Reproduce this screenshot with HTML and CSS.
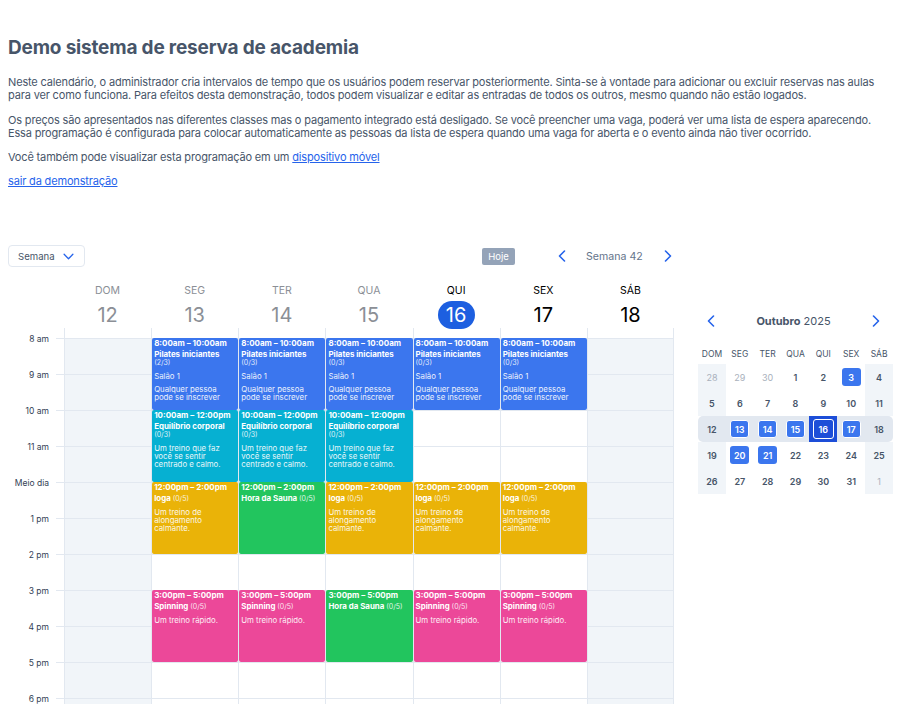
FILE: index.html
```html
<!DOCTYPE html>
<html lang="pt-BR">
<head>
  <meta charset="UTF-8" />
  <title>Demo sistema de reserva de academia</title>
  <link rel="stylesheet" href="styles.css">
</head>
<body>

  <div class="intro">
    <h1>Demo sistema de reserva de academia</h1>
    <p>Neste calendário, o administrador cria intervalos de tempo que os usuários podem reservar posteriormente. Sinta-se à vontade para adicionar ou excluir reservas nas aulas para ver como funciona. Para efeitos desta demonstração, todos podem visualizar e editar as entradas de todos os outros, mesmo quando não estão logados.</p>
    <p>Os preços são apresentados nas diferentes classes mas o pagamento integrado está desligado. Se você preencher uma vaga, poderá ver uma lista de espera aparecendo. Essa programação é configurada para colocar automaticamente as pessoas da lista de espera quando uma vaga for aberta e o evento ainda não tiver ocorrido.</p>
    <p>Você também pode visualizar esta programação em um <a href="#">dispositivo móvel</a></p>
    <p><a href="#">sair da demonstração</a></p>
  </div>

  <div class="schedule">
    <div class="main">
      <div class="toolbar">
        <div class="view-select">Semana
          <svg width="11" height="7" viewBox="0 0 12 8"><path d="M1 1.5l5 5 5-5" fill="none" stroke="#2563eb" stroke-width="1.5" stroke-linecap="round" stroke-linejoin="round"/></svg>
        </div>
        <button class="today-btn">Hoje</button>
        <div class="week-nav">
          <svg width="8" height="12" viewBox="0 0 8 12"><path d="M6.5 1l-5 5 5 5" fill="none" stroke="#2563eb" stroke-width="1.6" stroke-linecap="round" stroke-linejoin="round"/></svg>
          <span>Semana 42</span>
          <svg width="8" height="12" viewBox="0 0 8 12"><path d="M1.5 1l5 5-5 5" fill="none" stroke="#2563eb" stroke-width="1.6" stroke-linecap="round" stroke-linejoin="round"/></svg>
        </div>
      </div>

      <div class="day-heads">
        <div class="day-head past"><span class="dow">DOM</span><span class="num">12</span></div>
        <div class="day-head past"><span class="dow">SEG</span><span class="num">13</span></div>
        <div class="day-head past"><span class="dow">TER</span><span class="num">14</span></div>
        <div class="day-head past"><span class="dow">QUA</span><span class="num">15</span></div>
        <div class="day-head today"><span class="dow">QUI</span><span class="num">16</span></div>
        <div class="day-head"><span class="dow">SEX</span><span class="num">17</span></div>
        <div class="day-head"><span class="dow">SÁB</span><span class="num">18</span></div>
      </div>

      <div class="week">
        <div class="hours">
          <span>8 am</span><span>9 am</span><span>10 am</span><span>11 am</span><span>Meio dia</span><span>1 pm</span><span>2 pm</span><span>3 pm</span><span>4 pm</span><span>5 pm</span><span>6 pm</span>
        </div>

        <div class="day weekend"></div>

        <div class="day">
          <div class="event blue h2">
            <div class="ev-time">8:00am – 10:00am</div>
            <div class="ev-name">Pilates iniciantes</div>
            <div class="ev-count block">(2/3)</div>
            <div class="ev-text">Salão 1</div>
            <div class="ev-text">Qualquer pessoa pode se inscrever</div>
          </div>
          <div class="event cyan h2">
            <div class="ev-time">10:00am – 12:00pm</div>
            <div class="ev-name">Equilíbrio corporal</div>
            <div class="ev-count block">(0/3)</div>
            <div class="ev-text">Um treino que faz você se sentir centrado e calmo.</div>
          </div>
          <div class="event amber h2">
            <div class="ev-time">12:00pm – 2:00pm</div>
            <div class="ev-name">Ioga <span class="ev-count">(0/5)</span></div>
            <div class="ev-text">Um treino de alongamento calmante.</div>
          </div>
          <div class="gap"></div>
          <div class="event pink h2">
            <div class="ev-time">3:00pm – 5:00pm</div>
            <div class="ev-name">Spinning <span class="ev-count">(0/5)</span></div>
            <div class="ev-text">Um treino rápido.</div>
          </div>
        </div>

        <div class="day">
          <div class="event blue h2">
            <div class="ev-time">8:00am – 10:00am</div>
            <div class="ev-name">Pilates iniciantes</div>
            <div class="ev-count block">(0/3)</div>
            <div class="ev-text">Salão 1</div>
            <div class="ev-text">Qualquer pessoa pode se inscrever</div>
          </div>
          <div class="event cyan h2">
            <div class="ev-time">10:00am – 12:00pm</div>
            <div class="ev-name">Equilíbrio corporal</div>
            <div class="ev-count block">(0/3)</div>
            <div class="ev-text">Um treino que faz você se sentir centrado e calmo.</div>
          </div>
          <div class="event green h2">
            <div class="ev-time">12:00pm – 2:00pm</div>
            <div class="ev-name">Hora da Sauna <span class="ev-count">(0/5)</span></div>
          </div>
          <div class="gap"></div>
          <div class="event pink h2">
            <div class="ev-time">3:00pm – 5:00pm</div>
            <div class="ev-name">Spinning <span class="ev-count">(0/5)</span></div>
            <div class="ev-text">Um treino rápido.</div>
          </div>
        </div>

        <div class="day">
          <div class="event blue h2">
            <div class="ev-time">8:00am – 10:00am</div>
            <div class="ev-name">Pilates iniciantes</div>
            <div class="ev-count block">(0/3)</div>
            <div class="ev-text">Salão 1</div>
            <div class="ev-text">Qualquer pessoa pode se inscrever</div>
          </div>
          <div class="event cyan h2">
            <div class="ev-time">10:00am – 12:00pm</div>
            <div class="ev-name">Equilíbrio corporal</div>
            <div class="ev-count block">(0/3)</div>
            <div class="ev-text">Um treino que faz você se sentir centrado e calmo.</div>
          </div>
          <div class="event amber h2">
            <div class="ev-time">12:00pm – 2:00pm</div>
            <div class="ev-name">Ioga <span class="ev-count">(0/5)</span></div>
            <div class="ev-text">Um treino de alongamento calmante.</div>
          </div>
          <div class="gap"></div>
          <div class="event green h2">
            <div class="ev-time">3:00pm – 5:00pm</div>
            <div class="ev-name">Hora da Sauna <span class="ev-count">(0/5)</span></div>
          </div>
        </div>

        <div class="day">
          <div class="event blue h2">
            <div class="ev-time">8:00am – 10:00am</div>
            <div class="ev-name">Pilates iniciantes</div>
            <div class="ev-count block">(0/3)</div>
            <div class="ev-text">Salão 1</div>
            <div class="ev-text">Qualquer pessoa pode se inscrever</div>
          </div>
          <div class="gap h2"></div>
          <div class="event amber h2">
            <div class="ev-time">12:00pm – 2:00pm</div>
            <div class="ev-name">Ioga <span class="ev-count">(0/5)</span></div>
            <div class="ev-text">Um treino de alongamento calmante.</div>
          </div>
          <div class="gap"></div>
          <div class="event pink h2">
            <div class="ev-time">3:00pm – 5:00pm</div>
            <div class="ev-name">Spinning <span class="ev-count">(0/5)</span></div>
            <div class="ev-text">Um treino rápido.</div>
          </div>
        </div>

        <div class="day">
          <div class="event blue h2">
            <div class="ev-time">8:00am – 10:00am</div>
            <div class="ev-name">Pilates iniciantes</div>
            <div class="ev-count block">(0/3)</div>
            <div class="ev-text">Salão 1</div>
            <div class="ev-text">Qualquer pessoa pode se inscrever</div>
          </div>
          <div class="gap h2"></div>
          <div class="event amber h2">
            <div class="ev-time">12:00pm – 2:00pm</div>
            <div class="ev-name">Ioga <span class="ev-count">(0/5)</span></div>
            <div class="ev-text">Um treino de alongamento calmante.</div>
          </div>
          <div class="gap"></div>
          <div class="event pink h2">
            <div class="ev-time">3:00pm – 5:00pm</div>
            <div class="ev-name">Spinning <span class="ev-count">(0/5)</span></div>
            <div class="ev-text">Um treino rápido.</div>
          </div>
        </div>

        <div class="day weekend"></div>
      </div>
    </div>

    <div class="side">
      <div class="month-head">
        <svg width="8" height="12" viewBox="0 0 8 12"><path d="M6.5 1l-5 5 5 5" fill="none" stroke="#2563eb" stroke-width="1.6" stroke-linecap="round" stroke-linejoin="round"/></svg>
        <span><strong>Outubro</strong> 2025</span>
        <svg width="8" height="12" viewBox="0 0 8 12"><path d="M1.5 1l5 5-5 5" fill="none" stroke="#2563eb" stroke-width="1.6" stroke-linecap="round" stroke-linejoin="round"/></svg>
      </div>
      <div class="month-dows">
        <span>DOM</span><span>SEG</span><span>TER</span><span>QUA</span><span>QUI</span><span>SEX</span><span>SÁB</span>
      </div>
      <div class="month-row">
        <span class="d wknd out">28</span><span class="d out">29</span><span class="d out">30</span><span class="d">1</span><span class="d">2</span><span class="d"><b class="mark">3</b></span><span class="d wknd">4</span>
      </div>
      <div class="month-row">
        <span class="d wknd">5</span><span class="d">6</span><span class="d">7</span><span class="d">8</span><span class="d">9</span><span class="d">10</span><span class="d wknd">11</span>
      </div>
      <div class="month-row current">
        <span class="d">12</span><span class="d"><b class="mark ring">13</b></span><span class="d"><b class="mark ring">14</b></span><span class="d"><b class="mark ring">15</b></span><span class="d selected"><b class="mark ring">16</b></span><span class="d"><b class="mark ring">17</b></span><span class="d">18</span>
      </div>
      <div class="month-row">
        <span class="d wknd">19</span><span class="d"><b class="mark">20</b></span><span class="d"><b class="mark">21</b></span><span class="d">22</span><span class="d">23</span><span class="d">24</span><span class="d wknd">25</span>
      </div>
      <div class="month-row">
        <span class="d wknd">26</span><span class="d">27</span><span class="d">28</span><span class="d">29</span><span class="d">30</span><span class="d">31</span><span class="d wknd out">1</span>
      </div>
    </div>
  </div>

</body>
</html>
```

FILE: styles.css
```css
html, body {
  height: 704px;
  overflow: hidden;
}
body {
  font-family: Inter, "Liberation Sans", sans-serif;
  background: #fff;
  color: #475569;
  margin: 0;
  padding: 38px 0 0 8px;
  box-sizing: border-box;
}
a {
  color: #2563eb;
}

/* texto de cima */
.intro {
  height: 207px;
  width: 884px;
}
h1 {
  font-size: 19px;
  line-height: 20px;
  font-weight: 700;
  letter-spacing: -0.18px;
  margin: 0 0 18px;
}
.intro p {
  font-size: 11px;
  line-height: 13.3px;
  letter-spacing: -0.16px;
  margin: 0 0 11px;
}

.schedule {
  display: flex;
  gap: 24px;
}
.main {
  flex: none;
  width: 666px;
}

/* barra */
.toolbar {
  display: flex;
  align-items: center;
  height: 22px;
}
.view-select {
  display: flex;
  align-items: center;
  justify-content: space-between;
  box-sizing: border-box;
  width: 77px;
  height: 22px;
  padding: 0 10px 0 9px;
  border: 1px solid #e2e8f0;
  border-radius: 4px;
  font-size: 9.6px;
}
.today-btn {
  margin-left: 397px;
  width: 33px;
  height: 17px;
  padding: 0;
  border: 0;
  border-radius: 2px;
  background: #94a3b8;
  color: #fff;
  font-family: inherit;
  font-size: 9.5px;
}
.week-nav {
  display: flex;
  align-items: center;
  gap: 20px;
  margin-left: 43px;
  font-size: 10.6px;
  color: #64748b;
}
.week-nav span {
  margin-right: 1px;
}

/* cabecalho dos dias */
.day-heads {
  display: grid;
  grid-template-columns: repeat(7, 1fr);
  margin: 15px 0 0 56px;
  height: 46px;
  color: #000;
}
.day-head {
  display: flex;
  flex-direction: column;
  align-items: center;
}
.day-head.past {
  color: #8b8f96;
}
.dow {
  font-size: 10.5px;
  line-height: 14px;
  margin-top: 2px;
}
.num {
  font-size: 20px;
  line-height: 28px;
  margin-top: 3px;
}
.today .num {
  width: 37px;
  border-radius: 14px;
  background: #1d5fe0;
  color: #fff;
  text-align: center;
}

/* grade da semana */
.week {
  display: grid;
  grid-template-columns: 56px repeat(7, 1fr);
  height: 376px;
  background-image: linear-gradient(#e2e8f0 1px, transparent 1px);
  background-size: 100% 36px;
  background-position: 48px 10px;
  background-repeat: repeat-y;
}
.hours {
  display: flex;
  flex-direction: column;
  padding-top: 5px;
  font-size: 8.5px;
  color: #334155;
}
.hours span {
  height: 36px;
  flex: none;
  line-height: 13px;
  padding-right: 15px;
  text-align: right;
}
.hours span:last-child {
  height: 13px;
}
.day {
  display: flex;
  flex-direction: column;
  padding-top: 10px;
  border-left: 1px solid #e2e8f0;
  min-width: 0;
  height: 376px;
  box-sizing: border-box;
}
.day:last-child {
  border-right: 1px solid #e2e8f0;
}
.weekend {
  background-color: #f1f5f9;
  background-image: linear-gradient(#e2e8f0 1px, transparent 1px);
  background-size: 100% 36px;
  background-origin: content-box;
  background-clip: content-box;
}

/* eventos */
.event {
  box-sizing: border-box;
  padding: 0 2px;
  border-radius: 2px;
  color: #fff;
  overflow: hidden;
}
.h2 {
  height: 72px;
  flex: none;
}
.gap {
  height: 36px;
  flex: none;
}
.gap.h2 {
  height: 72px;
}
.blue { background: #3b76ee; }
.cyan { background: #06b0d2; }
.amber { background: #eab308; }
.green { background: #22c55e; }
.pink { background: #ec4899; }
.ev-time {
  font-size: 8px;
  line-height: 10px;
  font-weight: 700;
}
.ev-name {
  font-size: 7.9px;
  line-height: 9px;
  font-weight: 700;
  margin-top: 1.5px;
}
.ev-count {
  font-size: 7px;
  line-height: 8px;
  font-weight: 400;
  opacity: .85;
}
.ev-count.block {
  display: block;
}
.ev-text {
  font-size: 7.8px;
  line-height: 8px;
  margin-top: 5px;
  opacity: .9;
}

/* calendario do mes */
.side {
  flex: none;
  width: 195px;
  margin-top: 65px;
}
.month-head {
  display: flex;
  align-items: center;
  justify-content: space-between;
  padding: 0 13px 0 9px;
  font-size: 11px;
  color: #475569;
  height: 22px;
}
.month-dows,
.month-row {
  display: grid;
  grid-template-columns: repeat(7, 1fr);
}
.month-dows {
  margin-top: 12px;
  height: 20px;
  align-items: center;
  font-size: 8.5px;
  text-align: center;
}
.month-row {
  height: 26px;
}
.d {
  display: flex;
  align-items: center;
  justify-content: center;
  font-size: 9px;
  font-weight: 600;
  color: #475569;
}
.wknd {
  background: #f1f5f9;
}
.out {
  color: #a9b1bc;
  font-weight: 400;
}
.current {
  background: #e2e8f0;
  border-radius: 5px;
}
.mark {
  display: flex;
  align-items: center;
  justify-content: center;
  box-sizing: border-box;
  width: 19px;
  height: 18px;
  border-radius: 3px;
  background: #3b76ee;
  color: #fff;
  font-weight: 600;
}
.mark.ring {
  border: 1px solid #fff;
}
.d.selected {
  background: #1d4ed8;
}
.selected .mark.ring {
  width: 21px;
  height: 20px;
  background: #1d4ed8;
  border-width: 1.3px;
}
```
